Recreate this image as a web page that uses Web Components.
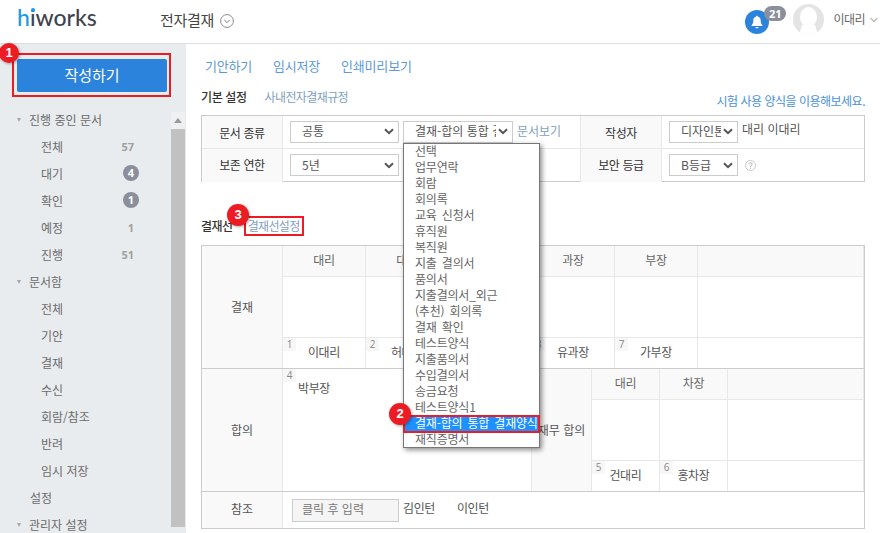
<!DOCTYPE html>
<html lang="ko">
  <head>
    <meta charset="UTF-8" />
    <title>전자결재</title>
    <style>
      html,
      body {
        margin: 0;
        height: 533px;
        overflow: hidden;
        background: #fff;
        font-family: "Noto Sans CJK KR", "Noto Sans", sans-serif;
        font-size: 12px;
        color: #666;
      }
    </style>
  </head>
  <body>
    <app-header></app-header>
    <app-body>
      <side-nav>
        <nav-item caret>진행 중인 문서</nav-item>
        <nav-item sub count="57">전체</nav-item>
        <nav-item sub badge="4">대기</nav-item>
        <nav-item sub badge="1">확인</nav-item>
        <nav-item sub count="1">예정</nav-item>
        <nav-item sub count="51">진행</nav-item>
        <nav-item caret>문서함</nav-item>
        <nav-item sub>전체</nav-item>
        <nav-item sub>기안</nav-item>
        <nav-item sub>결재</nav-item>
        <nav-item sub>수신</nav-item>
        <nav-item sub>회람/참조</nav-item>
        <nav-item sub>반려</nav-item>
        <nav-item sub>임시 저장</nav-item>
        <nav-item>설정</nav-item>
        <nav-item caret>관리자 설정</nav-item>
      </side-nav>
      <doc-main></doc-main>
    </app-body>

    <script>
      const chevron = `<svg width="10" height="7" viewBox="0 0 10 7"><path d="M1 1.2 5 5.2 9 1.2" fill="none" stroke="#555" stroke-width="2"/></svg>`;

      class AppHeader extends HTMLElement {
        constructor() {
          super();
          this.attachShadow({ mode: "open" });
          this.shadowRoot.innerHTML = `
            <style>
              :host {
                display: flex;
                align-items: center;
                height: 43px;
                border-bottom: 1px solid #ddd;
                padding: 0 2px 0 17px;
              }
              .logo {
                position: relative;
                width: 143px;
                font: 500 23px/30px Lato, sans-serif;
                color: #3d4450;
                margin-top: -9px;
              }
              .logo b {
                font-weight: 500;
                color: #1a9be6;
              }
              .logo i {
                position: absolute;
                left: 13.5px;
                top: 6px;
                width: 4px;
                height: 4px;
                border-radius: 50%;
                background: #1a9be6;
              }
              .title {
                font-size: 15px;
                letter-spacing: -0.3px;
                color: #444;
                margin-top: -5px;
              }
              .title-more {
                display: flex;
                margin-left: 6px;
                margin-top: -1px;
              }
              .right {
                margin-left: auto;
                display: flex;
                align-items: center;
              }
              .bell {
                position: relative;
                width: 24px;
                height: 24px;
                border-radius: 50%;
                background: #2b83dc;
                display: flex;
                align-items: center;
                justify-content: center;
                margin-top: 1px;
              }
              .bell span {
                position: absolute;
                left: 19px;
                top: -4px;
                width: 22px;
                height: 15px;
                border-radius: 8px;
                background: #8a8f9b;
                color: #fff;
                font: 700 11px/15px "Open Sans", sans-serif;
                text-align: center;
              }
              .avatar {
                display: flex;
                margin-left: 24px;
                margin-top: -4px;
              }
              .name {
                margin-left: 9px;
                margin-top: -7px;
                letter-spacing: -0.5px;
                color: #666;
              }
              .user-more {
                display: flex;
                margin-left: 5px;
                margin-top: -4px;
              }
            </style>
            <div class="logo"><b>h</b>iworks<i></i></div>
            <div class="title">전자결재</div>
            <div class="title-more">
              <svg width="14" height="14" viewBox="0 0 14 14">
                <circle cx="7" cy="7" r="6.4" fill="none" stroke="#8c8c8c" />
                <path d="M4.4 6 7 8.6 9.6 6" fill="none" stroke="#777" />
              </svg>
            </div>
            <div class="right">
              <div class="bell">
                <svg width="12" height="14" viewBox="0 0 12 14">
                  <path d="M6 .8c.6 0 1 .4 1 .9 2 .4 2.7 2 2.7 3.8 0 2.2.5 3.6 1.7 4.8v.8H.6v-.8c1.2-1.2 1.7-2.6 1.7-4.8 0-1.8.7-3.4 2.7-3.8 0-.5.4-.9 1-.9Z" fill="#fff" />
                  <path d="M4.500 12h3c0 .8-.7 1.400-1.500 1.400S4.500 12.800 4.500 12Z" fill="#fff" />
                </svg>
                <span>21</span>
              </div>
              <div class="avatar">
                <svg width="31" height="31" viewBox="0 0 31 31">
                  <defs>
                    <clipPath id="round"><circle cx="15.500" cy="15.500" r="15.500" /></clipPath>
                  </defs>
                  <circle cx="15.500" cy="15.500" r="15.500" fill="#e4e4e4" />
                  <g clip-path="url(#round)" fill="#fff">
                    <ellipse cx="15.500" cy="13" rx="8.500" ry="10" />
                    <path d="M9 21h13l3 10H6Z" />
                  </g>
                </svg>
              </div>
              <div class="name">이대리</div>
              <div class="user-more">
                <svg width="8" height="6" viewBox="0 0 8 6"><path d="M.6 1 4 4.400 7.400 1" fill="none" stroke="#bbb" stroke-width="1.400" /></svg>
              </div>
            </div>`;
        }
      }

      class AppBody extends HTMLElement {
        constructor() {
          super();
          this.attachShadow({ mode: "open" });
          this.shadowRoot.innerHTML = `
            <style>
              :host {
                display: flex;
                height: 489px;
              }
            </style>
            <slot></slot>`;
        }
      }

      class StepBadge extends HTMLElement {
        constructor() {
          super();
          this.attachShadow({ mode: "open" });
          this.shadowRoot.innerHTML = `
            <style>
              :host {
                position: absolute;
                z-index: 5;
                width: 22px;
                height: 22px;
                border-radius: 50%;
                background: #ed1c24;
                box-shadow: 1px 1px 3px rgba(0, 0, 0, 0.35);
                color: #fff;
                font: 700 13px/22px "Liberation Sans", sans-serif;
                text-align: center;
              }
            </style>
            <slot></slot>`;
        }
      }

      class SideNav extends HTMLElement {
        constructor() {
          super();
          this.attachShadow({ mode: "open" });
          this.shadowRoot.innerHTML = `
            <style>
              :host {
                position: relative;
                display: block;
                flex: 0 0 186px;
                background: #e9ecef;
              }
              step-badge {
                left: -1px;
                top: -1px;
                width: 20px;
                height: 20px;
                line-height: 20px;
              }
              .marked {
                box-sizing: border-box;
                width: 159px;
                height: 44px;
                margin: 9px 0 9px 12px;
                border: 2px solid #ed1c24;
                padding: 4px 2px 3px 3px;
              }
              .write {
                height: 33px;
                background: #2b83dc;
                border-radius: 2px;
                color: #fff;
                font-size: 15px;
                line-height: 32px;
                text-align: center;
              }
              .lower {
                display: flex;
              }
              .list {
                width: 171px;
                flex: none;
              }
              .bar {
                width: 14px;
                margin-top: 6px;
                display: flex;
                flex-direction: column;
                height: 415px;
              }
              .arrow {
                height: 17px;
                background: #eef0f2;
                display: flex;
                align-items: center;
                justify-content: center;
              }
              .thumb {
                flex: 1;
                background: #c1c1c1;
              }
            </style>
            <step-badge>1</step-badge>
            <div class="marked"><div class="write">작성하기</div></div>
            <div class="lower">
              <div class="list"><slot></slot></div>
              <div class="bar">
                <div class="arrow">
                  <svg width="8" height="5" viewBox="0 0 8 5"><path d="M4 0 8 5H0Z" fill="#9a9a9a" /></svg>
                </div>
                <div class="thumb"></div>
              </div>
            </div>`;
        }
      }

      class NavItem extends HTMLElement {
        constructor() {
          super();
          this.attachShadow({ mode: "open" });
          const count = this.getAttribute("count");
          const badge = this.getAttribute("badge");
          this.shadowRoot.innerHTML = `
            <style>
              :host {
                box-sizing: border-box;
                display: flex;
                align-items: center;
                height: 27px;
                padding: 0 37px 1px 30px;
                font-size: 12px;
                color: #6b6b6b;
              }
              :host([sub]) {
                padding-left: 41px;
              }
              .caret {
                width: 0;
                height: 0;
                margin: 1px 8px 0 -13px;
                border: 2.5px solid transparent;
                border-top: 4px solid #a5a5a5;
                border-bottom: 0;
              }
              .count {
                margin-left: auto;
                font: 700 11px "Open Sans", sans-serif;
                color: #a0a0a0;
              }
              .badge {
                margin: 0 -5px 0 auto;
                width: 16px;
                height: 16px;
                border-radius: 50%;
                background: #8a8f9b;
                color: #fff;
                font: 700 11px/16px "Open Sans", sans-serif;
                text-align: center;
              }
            </style>
            ${this.hasAttribute("caret") ? '<div class="caret"></div>' : ""}
            <slot></slot>
            ${count ? `<div class="count">${count}</div>` : ""}
            ${badge ? `<div class="badge">${badge}</div>` : ""}`;
        }
      }

      class FakeSelect extends HTMLElement {
        constructor() {
          super();
          this.attachShadow({ mode: "open" });
          this.shadowRoot.innerHTML = `
            <style>
              :host {
                box-sizing: border-box;
                display: flex;
                align-items: center;
                flex: none;
                height: 22px;
                border: 1px solid #ccc;
                background: #fff;
                padding: 0 4px 0 11px;
                color: #555;
                font-size: 12px;
              }
              .text {
                flex: 1;
                min-width: 0;
                overflow: hidden;
                white-space: nowrap;
                line-height: 17px;
                margin-top: -2px;
              }
              svg {
                flex: none;
                margin-left: 2px;
              }
            </style>
            <div class="text"><slot></slot></div>
            ${chevron}`;
        }
      }

      class SettingsTable extends HTMLElement {
        constructor() {
          super();
          this.attachShadow({ mode: "open" });
          this.shadowRoot.innerHTML = `
            <style>
              :host {
                box-sizing: border-box;
                display: grid;
                grid-template-columns: 81px 298px 81px 1fr;
                grid-template-rows: 33px 33px;
                width: 664px;
                height: 67px;
                border: 1px solid #ccc;
              }
              .label,
              .value {
                box-sizing: border-box;
                display: flex;
                align-items: center;
                border-right: 1px solid #e8e8e8;
                border-bottom: 1px solid #e8e8e8;
              }
              .label {
                justify-content: center;
                background: #f9f9f9;
                color: #333;
                letter-spacing: -0.4px;
              }
              .value {
                padding: 0 0 1px 7px;
                gap: 4px;
              }
              .last {
                border-right: 0;
              }
              .low {
                border-bottom: 0;
              }
              .low.label {
                padding-bottom: 2px;
              }
              .link {
                color: #7f9fc0;
                margin-top: -2px;
              }
              .mate {
                color: #555;
                margin-top: -6px;
              }
              .help {
                display: flex;
                margin-left: 3px;
              }
            </style>
            <div class="label">문서 종류</div>
            <div class="value">
              <fake-select style="width:109px">공통</fake-select>
              <fake-select style="width:110px">결재-합의 통합 결</fake-select>
              <span class="link">문서보기</span>
            </div>
            <div class="label">작성자</div>
            <div class="value last">
              <fake-select style="width:69px">디자인톤</fake-select>
              <span class="mate">대리 이대리</span>
            </div>
            <div class="label low">보존 연한</div>
            <div class="value low">
              <fake-select style="width:109px">5년</fake-select>
            </div>
            <div class="label low">보안 등급</div>
            <div class="value last low">
              <fake-select style="width:69px">B등급</fake-select>
              <span class="help">
                <svg width="11" height="11" viewBox="0 0 11 11">
                  <circle cx="5.500" cy="5.500" r="5" fill="none" stroke="#c8c8c8" />
                  <path d="M3.900 4.300c0-2 3.200-2 3.200-.1 0 1.200-1.600 1.200-1.600 2.500M5.500 7.600v1" fill="none" stroke="#aaa" />
                </svg>
              </span>
            </div>`;
        }
      }

      class SignGrid extends HTMLElement {
        constructor() {
          super();
          this.attachShadow({ mode: "open" });
          // "직급:이름:번호" 로 칸을 넘긴다
          const cells = this.getAttribute("cells").split(",").map((c) => c.split(":"));
          const head = cells.map((c) => `<div class="head">${c[0] || ""}</div>`).join("");
          const blank = cells.map(() => `<div class="blank"></div>`).join("");
          const names = cells
            .map((c) => `<div class="name">${c[2] ? `<span class="no">${c[2]}</span>` : ""}${c[1] || ""}</div>`)
            .join("");
          this.shadowRoot.innerHTML = `
            <style>
              :host {
                display: grid;
                grid-template-columns: repeat(${cells.length}, 1fr);
                grid-template-rows: 31px 61px 30px;
                flex: 1;
                min-width: 0;
                letter-spacing: -0.3px;
              }
              div {
                box-sizing: border-box;
                border-right: 1px solid #e8e8e8;
                border-bottom: 1px solid #e8e8e8;
                display: flex;
                align-items: center;
                justify-content: center;
                position: relative;
              }
              div:nth-child(${cells.length}n) {
                border-right: 0;
              }
              .head {
                background: #f9f9f9;
                color: #666;
                padding-bottom: 3px;
              }
              .name {
                border-bottom: 0;
                color: #555;
                padding-bottom: 3px;
              }
              .no {
                position: absolute;
                left: 0;
                top: 0;
                width: 13px;
                height: 13px;
                background: #f7f7f7;
                color: #888;
                font: 10px/13px "Open Sans", sans-serif;
                text-align: center;
              }
            </style>
            ${head}${blank}${names}`;
        }
      }

      class ApprovalTable extends HTMLElement {
        constructor() {
          super();
          this.attachShadow({ mode: "open" });
          this.shadowRoot.innerHTML = `
            <style>
              :host {
                box-sizing: border-box;
                display: block;
                width: 664px;
                height: 284px;
                border: 1px solid #ccc;
              }
              .row {
                display: flex;
                border-bottom: 1px solid #ccc;
              }
              .row.high {
                height: 122px;
              }
              .row.last {
                height: 36px;
                border-bottom: 0;
              }
              .label {
                box-sizing: border-box;
                flex: 0 0 81px;
                display: flex;
                align-items: center;
                justify-content: center;
                background: #f9f9f9;
                border-right: 1px solid #e8e8e8;
                padding-bottom: 2px;
                color: #555;
              }
              .last .label {
                padding-bottom: 4px;
              }
              .wide {
                box-sizing: border-box;
                position: relative;
                flex: 0 0 249px;
                border-right: 1px solid #e8e8e8;
                padding: 10px 0 0 15px;
                color: #555;
                letter-spacing: -0.4px;
              }
              .no {
                position: absolute;
                left: 0;
                top: 0;
                width: 13px;
                height: 13px;
                background: #f7f7f7;
                color: #888;
                font: 10px/13px "Open Sans", sans-serif;
                text-align: center;
              }
              .side {
                box-sizing: border-box;
                flex: 0 0 60px;
                background: #f9f9f9;
                border-right: 1px solid #e8e8e8;
                display: flex;
                align-items: center;
                justify-content: center;
                white-space: nowrap;
                padding-bottom: 2px;
                color: #555;
              }
              .ref {
                display: flex;
                align-items: center;
                padding-left: 9px;
                color: #555;
                letter-spacing: -0.4px;
              }
              .input {
                box-sizing: border-box;
                width: 107px;
                height: 23px;
                margin-right: 4px;
                background: #f5f5f5;
                border: 1px solid #ccc;
                padding-left: 9px;
                line-height: 17px;
                letter-spacing: 0;
                color: #777;
              }
              .ref span {
                margin-top: -6px;
              }
              .ref span + span {
                margin-left: 22px;
              }
            </style>
            <div class="row high">
              <div class="label">결재</div>
              <sign-grid cells="대리:이대리:1,대리:허대리:2,::,과장:유과장:8,부장:가부장:7,::,::"></sign-grid>
            </div>
            <div class="row high">
              <div class="label">합의</div>
              <div class="wide"><span class="no">4</span>박부장</div>
              <div class="side">재무 합의</div>
              <sign-grid cells="대리:건대리:5,차장:홍차장:6,::,::"></sign-grid>
            </div>
            <div class="row last">
              <div class="label">참조</div>
              <div class="ref">
                <div class="input">클릭 후 입력</div>
                <span>김인턴</span><span>이인턴</span>
              </div>
            </div>`;
        }
      }

      class FormDropdown extends HTMLElement {
        constructor() {
          super();
          this.attachShadow({ mode: "open" });
          const forms = [
            "선택", "업무연락", "회람", "회의록", "교육 신청서", "휴직원", "복직원", "지출 결의서",
            "품의서", "지출결의서_외근", "(추천) 회의록", "결재 확인", "테스트양식", "지출품의서",
            "수입결의서", "송금요청", "테스트양식1", "결재-합의 통합 결재양식", "재직증명서",
          ];
          const rows = forms
            .map((f) => `<div class="${f.startsWith("결재-합의") ? "opt on" : "opt"}">${f}</div>`)
            .join("");
          this.shadowRoot.innerHTML = `
            <style>
              :host {
                position: absolute;
                left: 217px;
                top: 99px;
                z-index: 3;
                box-sizing: border-box;
                width: 137px;
                height: 305px;
                background: #fff;
                border: 1px solid #777;
                box-shadow: 2px 2px 5px rgba(0, 0, 0, 0.45);
              }
              .opt {
                height: 16px;
                line-height: 13px;
                padding-left: 11px;
                color: #666;
                white-space: nowrap;
                letter-spacing: -0.2px;
                word-spacing: 2px;
              }
              .on {
                background: #1e90ff;
                color: #fff;
                outline: 2px solid #ed1c24;
                outline-offset: -1px;
                position: relative;
              }
            </style>
            ${rows}`;
        }
      }

      class DocMain extends HTMLElement {
        constructor() {
          super();
          this.attachShadow({ mode: "open" });
          this.shadowRoot.innerHTML = `
            <style>
              :host {
                position: relative;
                display: block;
                flex: 1;
                padding-left: 15px;
              }
              .tools {
                display: flex;
                gap: 21px;
                padding: 12px 0 0 4px;
                height: 19px;
                line-height: 20px;
                font-size: 13px;
                letter-spacing: -0.2px;
                color: #5b9bd8;
              }
              .tabs {
                display: flex;
                align-items: flex-start;
                height: 28px;
                margin-top: 12px;
                width: 664px;
                line-height: 20px;
              }
              .tabs b {
                font-weight: 500;
                color: #333;
                letter-spacing: -0.4px;
                margin-right: 18px;
              }
              .rule {
                color: #7f9fc0;
                letter-spacing: -0.6px;
              }
              .try {
                margin-left: auto;
                margin-top: 4px;
                letter-spacing: -0.5px;
                color: #4a90d9;
              }
              .line {
                display: flex;
                align-items: center;
                height: 20px;
                margin: 34px 0 9px;
              }
              .line b {
                font-weight: 500;
                color: #333;
                letter-spacing: -0.5px;
                margin-right: 11px;
                margin-top: -2px;
              }
              .set {
                box-sizing: border-box;
                height: 20px;
                width: 60px;
                border: 2px solid #ed1c24;
                line-height: 15px;
                letter-spacing: -0.7px;
                text-align: center;
                color: #7f9fc0;
                white-space: nowrap;
              }
              .two {
                left: 203px;
                top: 359px;
              }
              .three {
                left: 41px;
                top: 160px;
              }
            </style>
            <div class="tools"><span>기안하기</span><span>임시저장</span><span>인쇄미리보기</span></div>
            <div class="tabs">
              <b>기본 설정</b><span class="rule">사내전자결재규정</span>
              <span class="try">시험 사용 양식을 이용해보세요.</span>
            </div>
            <settings-table></settings-table>
            <div class="line"><b>결재선</b><div class="set">결재선설정</div></div>
            <approval-table></approval-table>
            <form-dropdown></form-dropdown>
            <step-badge class="two">2</step-badge>
            <step-badge class="three">3</step-badge>`;
        }
      }

      customElements.define("app-header", AppHeader);
      customElements.define("app-body", AppBody);
      customElements.define("step-badge", StepBadge);
      customElements.define("side-nav", SideNav);
      customElements.define("nav-item", NavItem);
      customElements.define("fake-select", FakeSelect);
      customElements.define("settings-table", SettingsTable);
      customElements.define("sign-grid", SignGrid);
      customElements.define("approval-table", ApprovalTable);
      customElements.define("form-dropdown", FormDropdown);
      customElements.define("doc-main", DocMain);
    </script>
  </body>
</html>
